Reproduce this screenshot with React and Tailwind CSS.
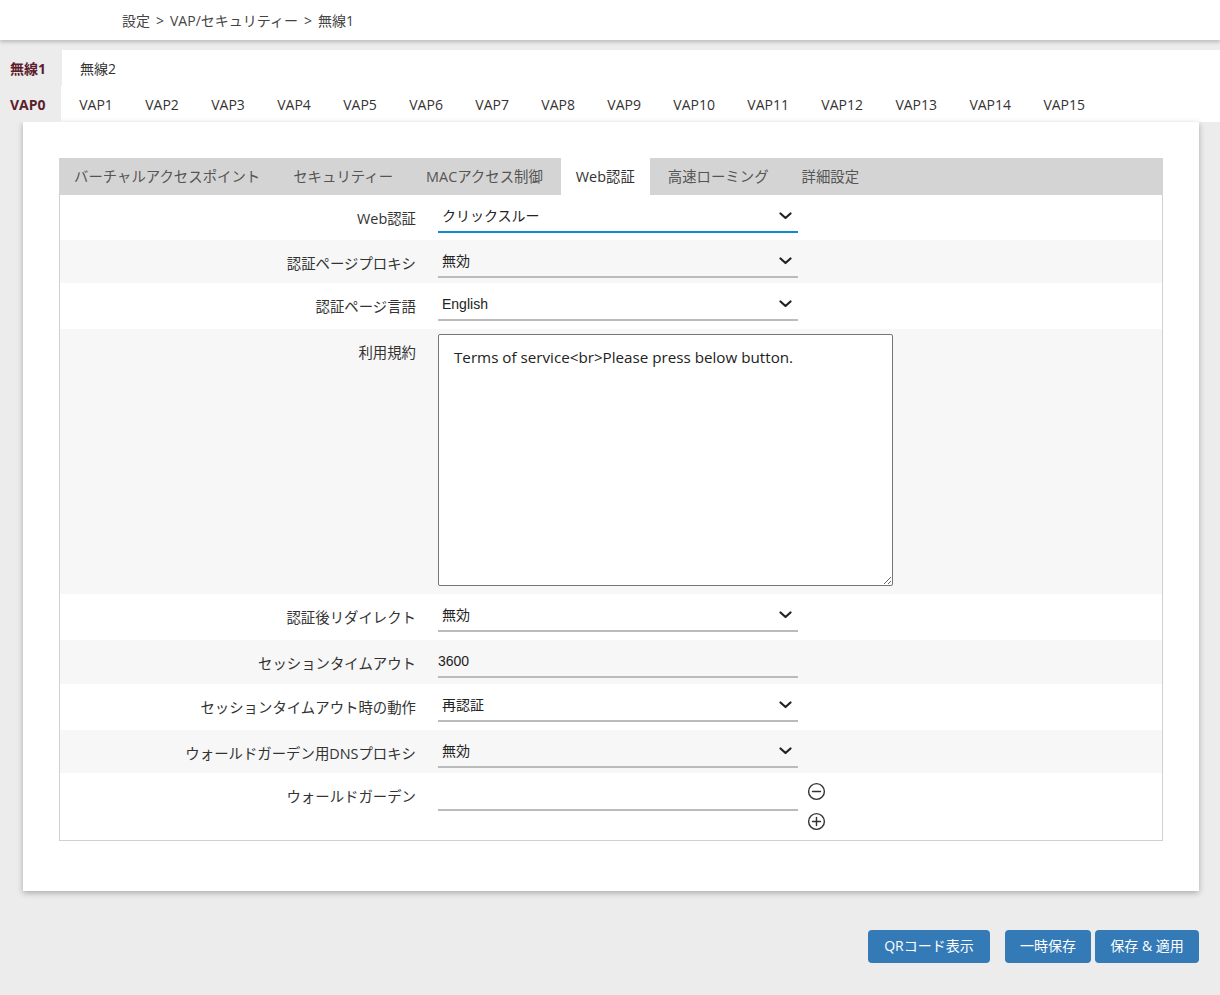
const vaps = ['VAP1', 'VAP2', 'VAP3', 'VAP4', 'VAP5', 'VAP6', 'VAP7', 'VAP8', 'VAP9', 'VAP10', 'VAP11', 'VAP12', 'VAP13', 'VAP14', 'VAP15']

const innerTabs = ['バーチャルアクセスポイント', 'セキュリティー', 'MACアクセス制御', 'Web認証', '高速ローミング', '詳細設定']

const jp = { fontFamily: '"Open Sans", "Noto Sans CJK JP", sans-serif' }
const arial = { fontFamily: '"Liberation Sans", "Noto Sans CJK JP", sans-serif' }

function Chevron() {
  return (
    <svg className="w-[13px] h-[8px]" viewBox="0 0 13 8" fill="none" stroke="#222" strokeWidth="2.2" strokeLinecap="round" strokeLinejoin="round">
      <path d="M1.5 1.5l5 4.5 5-4.5" />
    </svg>
  )
}

function Select({ value, active }) {
  return (
    <div
      className={`mt-[8px] w-[360px] h-[30px] flex items-center justify-between pl-[4px] pr-[6px] pb-[2px] text-[14px] text-[#222] border-b-2 ${active ? 'border-[#0b8fcc]' : 'border-[#bbbbbb]'}`}
      style={arial}
    >
      <span>{value}</span>
      <Chevron />
    </div>
  )
}

function Label({ children }) {
  return (
    <div className="w-[356px] shrink-0 text-right pt-[14px] leading-[20px] text-[14.4px] text-[#333]">
      {children}
    </div>
  )
}

function Row({ label, h, gray, children }) {
  return (
    <div className={`flex gap-[22px] ${gray ? 'bg-[#f7f7f7]' : 'bg-white'}`} style={{ height: h }}>
      <Label>{label}</Label>
      <div>{children}</div>
    </div>
  )
}

function CircleIcon({ plus }) {
  return (
    <svg className="w-[19px] h-[19px]" viewBox="0 0 20 20" fill="none" stroke="#333" strokeWidth="1.5" strokeLinecap="round">
      <circle cx="10" cy="10" r="8.3" />
      <path d="M5.8 10h8.4" />
      {plus && <path d="M10 5.8v8.4" />}
    </svg>
  )
}

const Sep = () => <span className="mx-[6px]">&gt;</span>

export default function App() {
  return (
    <div className="min-h-[995px] bg-[#ececec]" style={jp}>
      <header className="relative z-10 h-10 bg-white shadow-[0_2px_4px_rgba(0,0,0,0.22)] flex items-center pt-[1px] pl-[122px] text-[14px] text-[#444]">
        設定<Sep />VAP/セキュリティー<Sep />無線1
      </header>

      <div className="mt-[10px]">
        <div className="flex h-9 pt-[1px] bg-white text-[14px]">
          <div className="w-[62px] -mt-[1px] bg-[#ececec] flex items-center pt-[1px] pl-[10px] font-bold text-[#5c1e2e]">無線1</div>
          <div className="flex items-center px-[18px] text-[#333]">無線2</div>
        </div>
        <div className="flex h-9 bg-white text-[14px]">
          <div className="w-[61px] bg-[#ececec] flex items-center pt-[1px] pl-[10px] font-bold text-[#5c1e2e]">VAP0</div>
          <div className="flex ml-[2px]">
            {vaps.map((v) => (
              <div key={v} className="flex items-center pt-[1px] px-[16.2px] text-[#333]">{v}</div>
            ))}
          </div>
        </div>
      </div>

      <div className="ml-[23px] mr-[21px] bg-white shadow-[0_2px_6px_rgba(0,0,0,0.28)] pt-9 px-9 pb-[50px]">
        <div className="flex h-[37px] bg-[#d4d4d4] text-[14.4px]">
          {innerTabs.map((t) => (
            <div
              key={t}
              className={`flex items-center px-[15px] mr-[3px] ${t === 'Web認証' ? 'bg-white text-[#333]' : 'text-[#555]'}`}
            >
              {t}
            </div>
          ))}
        </div>

        <div className="border border-t-0 border-[#d0d0d0]">
          <Row label="Web認証" h={45}>
            <Select value="クリックスルー" active />
          </Row>
          <Row label="認証ページプロキシ" h={43} gray>
            <Select value="無効" />
          </Row>
          <Row label="認証ページ言語" h={46}>
            <Select value="English" />
          </Row>
          <Row label="利用規約" h={265} gray>
            <textarea
              className="mt-[5px] w-[455px] h-[252px] bg-white border border-[#767676] rounded-[2px] px-[15px] pt-[12px] pb-[14px] text-[15.2px] leading-5 text-[#222] resize"
              style={jp}
              defaultValue="Terms of service<br>Please press below button."
            />
          </Row>
          <Row label="認証後リダイレクト" h={46}>
            <Select value="無効" />
          </Row>
          <Row label="セッションタイムアウト" h={44} gray>
            <div className="mt-[8px] w-[360px] h-[30px] flex items-center pb-[2px] text-[14px] text-[#222] border-b-2 border-[#bbbbbb]" style={arial}>
              3600
            </div>
          </Row>
          <Row label="セッションタイムアウト時の動作" h={46}>
            <Select value="再認証" />
          </Row>
          <Row label="ウォールドガーデン用DNSプロキシ" h={43} gray>
            <Select value="無効" />
          </Row>
          <Row label="ウォールドガーデン" h={67}>
            <div className="flex gap-[9px]">
              <div className="mt-[8px] w-[360px] h-[30px] border-b-2 border-[#bbbbbb]" />
              <div className="flex flex-col gap-[11px] pt-[9px]">
                <CircleIcon />
                <CircleIcon plus />
              </div>
            </div>
          </Row>
        </div>
      </div>

      <div className="mt-[39px] flex justify-end pr-[21px] text-[14px] text-white">
        <button className="w-[122px] h-[33px] pb-[2px] rounded-[4px] bg-[#337ab7]">QRコード表示</button>
        <button className="ml-[15px] w-[86px] h-[33px] pb-[2px] rounded-[4px] bg-[#337ab7]">一時保存</button>
        <button className="ml-[4px] w-[104px] h-[33px] pb-[2px] rounded-[4px] bg-[#337ab7]">保存 &amp; 適用</button>
      </div>
    </div>
  )
}
